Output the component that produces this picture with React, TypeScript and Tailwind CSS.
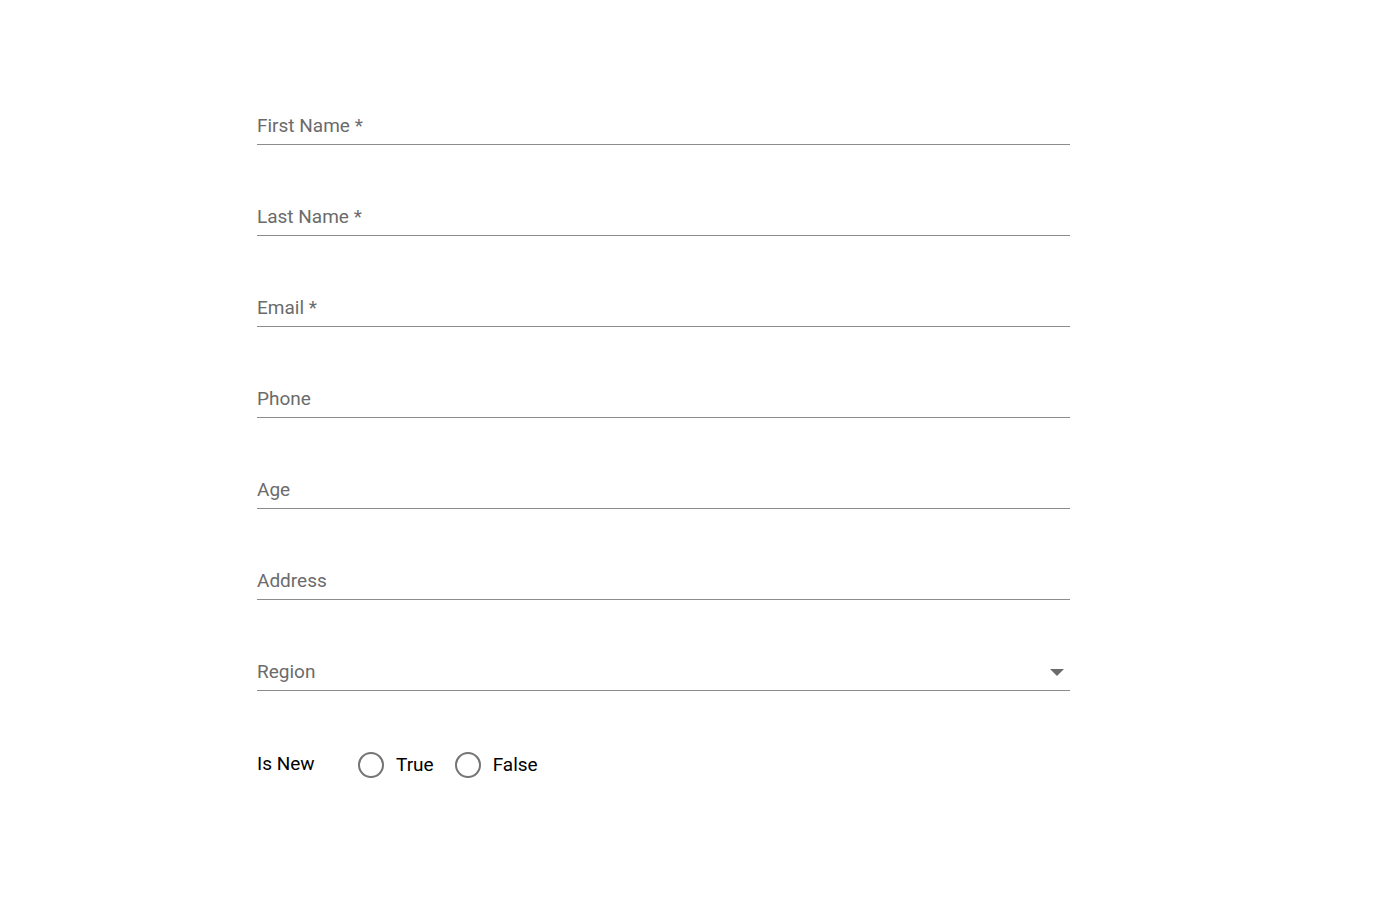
const fields = ['First Name *', 'Last Name *', 'Email *', 'Phone', 'Age', 'Address'];

function Field({ label, select }: { label: string; select?: boolean }) {
  return (
    <div className="h-[91px] flex items-end">
      <div className="w-full border-b border-[#8c8c8c] flex items-center justify-between pb-[7px]">
        <span className="text-[19px] leading-[22px] text-[#6b6b6b]">{label}</span>
        {select && (
          <svg width="14" height="7" viewBox="0 0 14 7" className="mr-[6px] mt-[1px]">
            <path d="M0 0h14L7 7z" fill="#6b6b6b" />
          </svg>
        )}
      </div>
    </div>
  );
}

function Radio({ label }: { label: string }) {
  return (
    <label className="flex items-center gap-[12px]">
      <span className="w-[26px] h-[26px] rounded-full border-[2.5px] border-[#757575]" />
      <span className="text-[19px] text-black">{label}</span>
    </label>
  );
}

export default function App() {
  return (
    <div className="min-h-screen bg-white" style={{ fontFamily: 'Roboto, "Noto Sans", sans-serif' }}>
      <div className="ml-[257px] w-[813px] pt-[54px]">
        {fields.map((f) => (
          <Field key={f} label={f} />
        ))}
        <Field label="Region" select />
        <div className="flex items-center mt-[60px]">
          <span className="text-[19px] text-black w-[101px] -mt-[2px]">Is New</span>
          <div className="flex items-center gap-[21px]">
            <Radio label="True" />
            <Radio label="False" />
          </div>
        </div>
      </div>
    </div>
  );
}
